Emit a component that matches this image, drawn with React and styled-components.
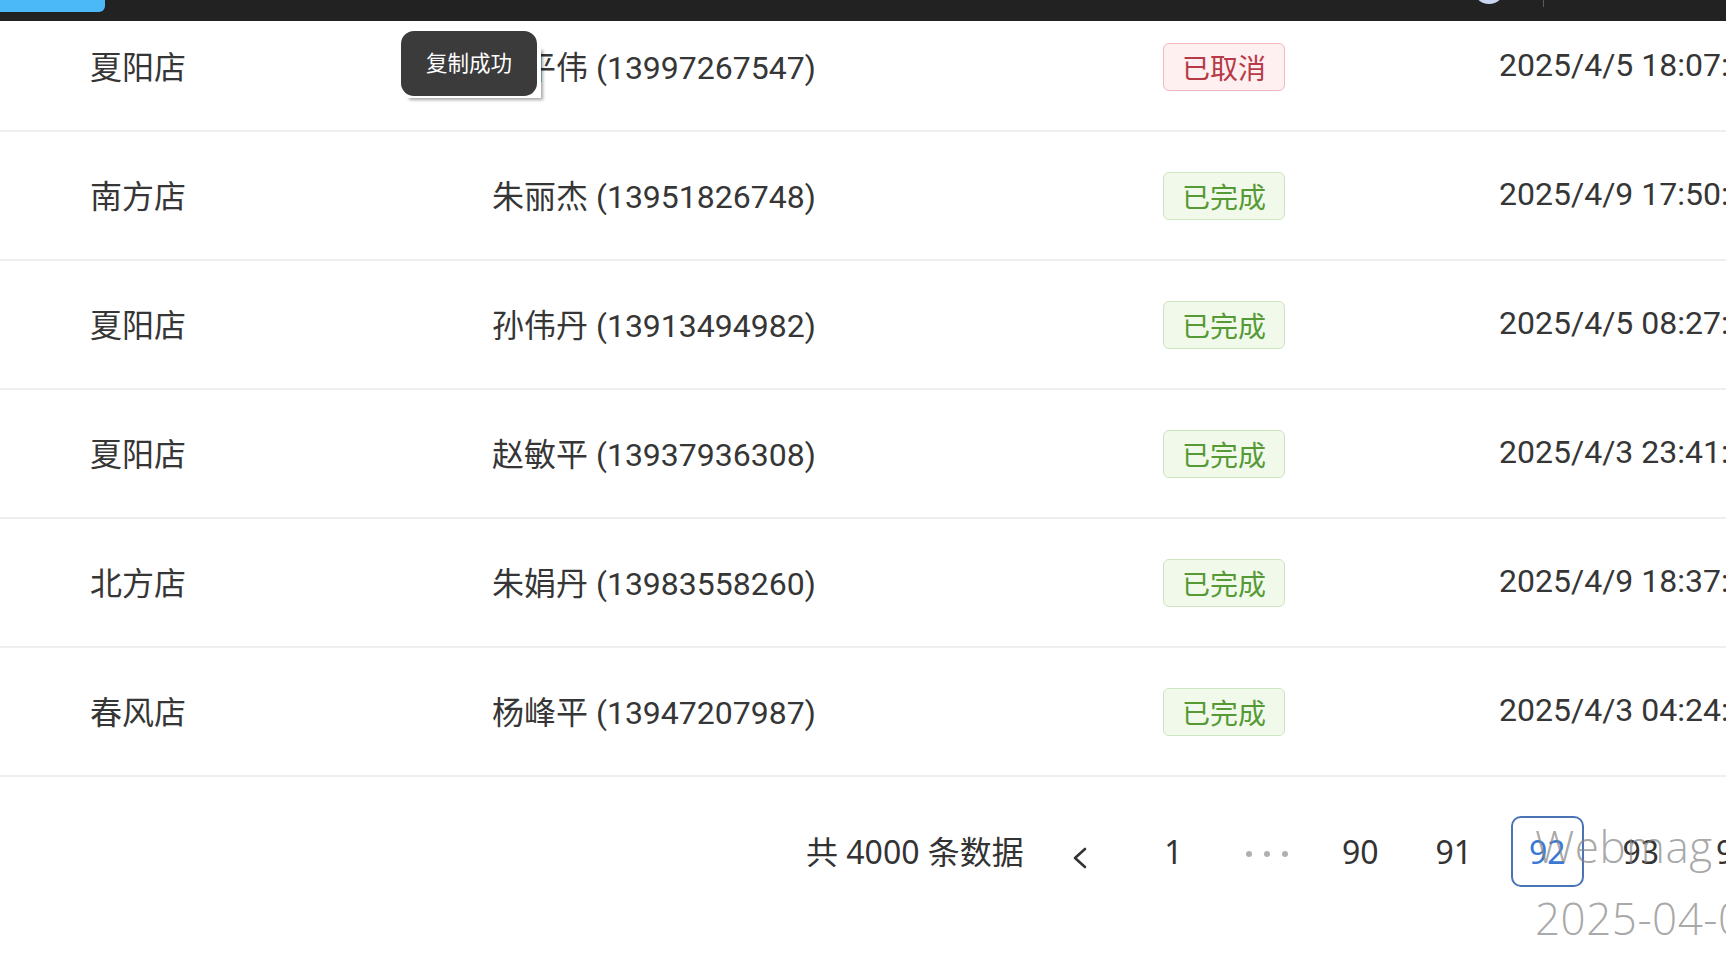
import styled, { createGlobalStyle } from 'styled-components';

const GlobalStyle = createGlobalStyle`
  body {
    margin: 0;
    background: #ffffff;
    overflow: hidden;
    font-family: 'Noto Sans', 'Noto Sans CJK SC', sans-serif;
  }
`;

const Page = styled.div`
  position: relative;
  width: 1726px;
  height: 958px;
  overflow: hidden;
  background: #ffffff;
`;

const TopBar = styled.div`
  position: fixed;
  top: 0;
  left: 0;
  right: 0;
  height: 21px;
  background: #222222;
  display: flex;
  align-items: flex-start;
  z-index: 10;
  overflow: hidden;
`;

const BrandButton = styled.div`
  width: 105px;
  height: 12px;
  background: #4bb9f8;
  border-bottom-right-radius: 6px;
`;

const TopRight = styled.div`
  margin-left: auto;
  display: flex;
  align-items: flex-start;
  gap: 38px;
  padding-right: 182px;
`;

const Avatar = styled.div`
  width: 32px;
  height: 32px;
  border-radius: 50%;
  background: #c9d6f1;
  margin-top: -28px;
`;

const Divider = styled.div`
  width: 1px;
  height: 7px;
  background: #5a5a5a;
`;

const Table = styled.div`
  padding-top: 3px;
`;

const Row = styled.div`
  display: grid;
  grid-template-columns: 402px 671px 336px 1fr;
  align-items: center;
  height: 127px;
  padding-left: 90px;
  border-bottom: 2px solid #eeeeee;
  font-family: Roboto, 'Noto Sans CJK SC', sans-serif;
  font-size: 32px;
  color: #363636;
  white-space: nowrap;
`;

const Cell = styled.div`
  padding-bottom: ${p => (p.$tag ? '0' : '4px')};
`;

const Tag = styled.span`
  display: inline-flex;
  align-items: center;
  height: 48px;
  box-sizing: border-box;
  padding: 0 18px;
  border-radius: 6px;
  font-size: 28px;
  font-family: 'Noto Sans CJK SC', sans-serif;
  border: 1.5px solid ${p => (p.$tone === 'danger' ? '#f1b9be' : '#cde5bf')};
  background: ${p => (p.$tone === 'danger' ? '#fef0f0' : '#f1f9eb')};
  color: ${p => (p.$tone === 'danger' ? '#b83a46' : '#559a35')};
`;

const Pager = styled.div`
  display: flex;
  align-items: center;
  gap: 20.5px;
  margin-top: 39px;
  padding-left: 806px;
  white-space: nowrap;
  font-size: 32px;
  color: #333333;
`;

const Total = styled.span`
  margin-right: -1px;
  padding-bottom: 4px;
`;

const PageItem = styled.div`
  flex: none;
  width: 73px;
  height: 71px;
  box-sizing: border-box;
  display: flex;
  align-items: center;
  justify-content: center;
  border-radius: 10px;
  border: 2px solid ${p => (p.$active ? '#4a74b4' : 'transparent')};
  color: ${p => (p.$active ? '#3a78d6' : '#333333')};
`;

const PrevItem = styled(PageItem)`
  padding-top: 12px;
`;

const Dots = styled.div`
  display: flex;
  gap: 12px;
  padding-top: 4px;

  span {
    width: 6px;
    height: 6px;
    border-radius: 50%;
    background: #b0b0b0;
  }
`;

const Toast = styled.div`
  position: absolute;
  left: 401px;
  top: 31px;
  width: 136px;
  height: 65px;
  z-index: 5;

  &::before {
    content: '';
    position: absolute;
    left: 6px;
    top: 17px;
    right: -4px;
    bottom: -2px;
    background: #ffffff;
    box-shadow: 2px 2px 3px rgba(0, 0, 0, 0.35);
  }
`;

const ToastBody = styled.div`
  position: relative;
  height: 100%;
  box-sizing: border-box;
  padding-bottom: 4px;
  display: flex;
  align-items: center;
  justify-content: center;
  background: #3b3b3b;
  border-radius: 13px;
  color: #ffffff;
  font-size: 21.5px;
  font-family: 'Noto Sans CJK SC', sans-serif;
`;

const Watermark = styled.div`
  position: absolute;
  left: 1535px;
  top: 810px;
  z-index: 4;
  pointer-events: none;
  font-family: 'Open Sans', sans-serif;
  font-weight: 300;
  font-size: 44px;
  letter-spacing: 0.5px;
  line-height: 72px;
  color: rgba(130, 130, 130, 0.7);
  white-space: nowrap;
`;

const rows = [
  { store: '夏阳店', customer: '刘平伟 (13997267547)', status: '已取消', tone: 'danger', time: '2025/4/5 18:07:12' },
  { store: '南方店', customer: '朱丽杰 (13951826748)', status: '已完成', tone: 'success', time: '2025/4/9 17:50:31' },
  { store: '夏阳店', customer: '孙伟丹 (13913494982)', status: '已完成', tone: 'success', time: '2025/4/5 08:27:45' },
  { store: '夏阳店', customer: '赵敏平 (13937936308)', status: '已完成', tone: 'success', time: '2025/4/3 23:41:09' },
  { store: '北方店', customer: '朱娟丹 (13983558260)', status: '已完成', tone: 'success', time: '2025/4/9 18:37:26' },
  { store: '春风店', customer: '杨峰平 (13947207987)', status: '已完成', tone: 'success', time: '2025/4/3 04:24:58' },
];

function ChevronLeft() {
  return (
    <svg width="16" height="22" viewBox="0 0 16 22" fill="none">
      <polyline points="13,2 3,11 13,20" stroke="#333" strokeWidth="2.6" strokeLinecap="round" strokeLinejoin="round" />
    </svg>
  );
}

function App() {
  return (
    <Page>
      <GlobalStyle />
      <TopBar>
        <BrandButton />
        <TopRight>
          <Avatar />
          <Divider />
        </TopRight>
      </TopBar>

      <Table>
        {rows.map((r, i) => (
          <Row key={i}>
            <Cell>{r.store}</Cell>
            <Cell>{r.customer}</Cell>
            <Cell $tag><Tag $tone={r.tone}>{r.status}</Tag></Cell>
            <Cell>{r.time}</Cell>
          </Row>
        ))}
      </Table>

      <Pager>
        <Total>共 4000 条数据</Total>
        <PrevItem><ChevronLeft /></PrevItem>
        <PageItem>1</PageItem>
        <PageItem><Dots><span /><span /><span /></Dots></PageItem>
        <PageItem>90</PageItem>
        <PageItem>91</PageItem>
        <PageItem $active>92</PageItem>
        <PageItem>93</PageItem>
        <PageItem>94</PageItem>
      </Pager>

      <Toast><ToastBody>复制成功</ToastBody></Toast>

      <Watermark>
        <div>Webmag</div>
        <div>2025-04-09 10:32</div>
      </Watermark>
    </Page>
  );
}

export default App;
